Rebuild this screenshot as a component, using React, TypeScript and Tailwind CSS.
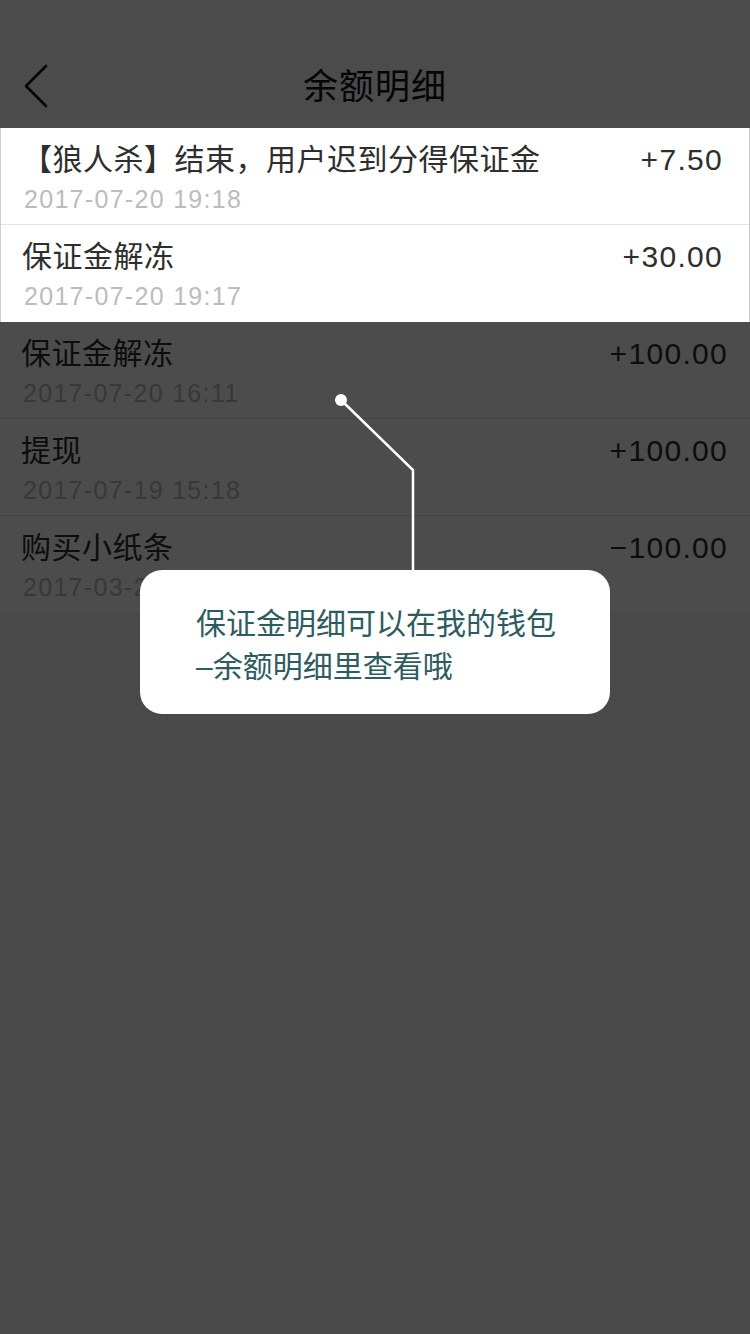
import React from "react";

// ─── Data ─────────────────────────────────────────────────

interface Record {
  title: string;
  time: string;
  amount: string;
}

const RECORDS: Record[] = [
  { title: "【狼人杀】结束，用户迟到分得保证金", time: "2017-07-20 19:18", amount: "+7.50" },
  { title: "保证金解冻", time: "2017-07-20 19:17", amount: "+30.00" },
  { title: "保证金解冻", time: "2017-07-20 16:11", amount: "+100.00" },
  { title: "提现", time: "2017-07-19 15:18", amount: "+100.00" },
  { title: "购买小纸条", time: "2017-03-28 11:02", amount: "−100.00" },
];

const FONT = "font-['Liberation_Sans','Noto_Sans_CJK_SC',sans-serif]";

// ─── Row ──────────────────────────────────────────────────

function RecordRow({ rec, last, pr }: { rec: Record; last?: boolean; pr: string }) {
  return (
    <div
      className={`h-[97px] flex flex-col pl-[21px] ${pr} pt-[14px] ${
        last ? "" : "border-b border-[#e2e2e2]"
      }`}
    >
      <div className="flex items-center justify-between h-[36px]">
        <span className="text-[30px] leading-[36px] tracking-[0.5px] text-[#2e2e2e]">{rec.title}</span>
        <span className="text-[30px] leading-[36px] tracking-[1.3px] text-[#2e2e2e]">{rec.amount}</span>
      </div>
      <span className="mt-[6px] ml-[2px] text-[25px] leading-[30px] tracking-[1.3px] text-[#bcbcbc]">
        {rec.time}
      </span>
    </div>
  );
}

// ─── Page ─────────────────────────────────────────────────

export default function App() {
  const highlighted = RECORDS.slice(0, 2);
  const rest = RECORDS.slice(2);

  return (
    <div className={`relative w-[750px] h-[1334px] overflow-hidden bg-[#f4f4f4] ${FONT}`}>
      {/* Nav bar */}
      <header className="h-[128px] bg-[#fbfbfb] pt-[46px] relative flex items-center justify-center">
        <svg
          className="absolute left-[22px] top-[64px]"
          width="28"
          height="44"
          viewBox="0 0 28 44"
          fill="none"
        >
          <path d="M24 2 L4 22 L24 42" stroke="#111" strokeWidth="2.6" strokeLinecap="round" strokeLinejoin="round" />
        </svg>
        <h1 className="text-[35px] leading-[40px] text-[#111] tracking-[1px]">余额明细</h1>
      </header>

      {/* List — first two rows sit above the guide overlay */}
      <div className="relative z-10 bg-white border-x border-[#cfcfcf]">
        {highlighted.map((rec, i) => (
          <RecordRow key={i} rec={rec} last={i === highlighted.length - 1} pr="pr-[26px]" />
        ))}
      </div>
      <div className="bg-white">
        {rest.map((rec, i) => (
          <RecordRow key={i} rec={rec} last={i === rest.length - 1} pr="pr-[22px]" />
        ))}
      </div>

      {/* Guide overlay */}
      <div className="absolute inset-0 z-0 bg-black/70" />

      {/* Callout line */}
      <svg className="absolute left-0 top-0 z-20" width="750" height="600" viewBox="0 0 750 600" fill="none">
        <circle cx="341" cy="400" r="6" fill="#fff" />
        <path d="M341 400 L413 470 L413 572" stroke="#fff" strokeWidth="2.5" />
      </svg>

      {/* Tip bubble */}
      <div className="absolute z-20 left-[140px] top-[570px] w-[470px] h-[144px] bg-white rounded-[22px] flex items-center pl-[56px] pt-[5px]">
        <p className="text-[30px] leading-[43px] text-[#2e5b60]">
          保证金明细可以在我的钱包
          <br />
          –余额明细里查看哦
        </p>
      </div>
    </div>
  );
}
